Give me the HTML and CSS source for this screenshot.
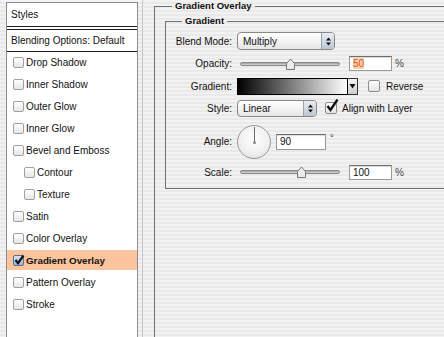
FILE: index.html
```html
<!DOCTYPE html>
<html lang="en">
<head>
  <meta charset="UTF-8" />
  <title>Layer Style - Gradient Overlay</title>
  <link rel="stylesheet" href="styles.css">
</head>
<body>

  <div class="window">
    <aside class="styles-panel">
      <div class="panel-title">Styles</div>
      <div class="panel-blend">Blending Options: Default</div>
      <ul class="style-list">
        <li class="style-item"><span class="check"></span>Drop Shadow</li>
        <li class="style-item"><span class="check"></span>Inner Shadow</li>
        <li class="style-item"><span class="check"></span>Outer Glow</li>
        <li class="style-item"><span class="check"></span>Inner Glow</li>
        <li class="style-item"><span class="check"></span>Bevel and Emboss</li>
        <li class="style-item sub"><span class="check"></span>Contour</li>
        <li class="style-item sub"><span class="check"></span>Texture</li>
        <li class="style-item"><span class="check"></span>Satin</li>
        <li class="style-item"><span class="check"></span>Color Overlay</li>
        <li class="style-item selected">
          <span class="check on">
            <svg viewBox="0 0 12 12" width="12" height="12"><path d="M2.5 6 L5 9.2 L10.5 1.5" fill="none" stroke="#111" stroke-width="2.2"/></svg>
          </span>Gradient Overlay
        </li>
        <li class="style-item"><span class="check"></span>Pattern Overlay</li>
        <li class="style-item"><span class="check"></span>Stroke</li>
      </ul>
    </aside>

    <div class="gutter"></div>

    <main class="settings">
      <fieldset class="group outer">
        <legend>Gradient Overlay</legend>

        <fieldset class="group inner">
          <legend>Gradient</legend>

          <div class="row row-blend">
            <span class="label">Blend Mode:</span>
            <div class="popup popup-blend">
              <span class="popup-value">Multiply</span>
              <span class="popup-arrows">
                <svg viewBox="0 0 7 11" width="7" height="11"><path d="M3.5 1.5 L6 4.5 H1 Z M1 6.5 H6 L3.5 9.5 Z" fill="#111"/></svg>
              </span>
            </div>
          </div>

          <div class="row row-opacity">
            <span class="label">Opacity:</span>
            <div class="slider">
              <div class="slider-track"></div>
              <svg class="slider-thumb" style="left: 50%" viewBox="0 0 11 12" width="11" height="12"><path d="M1.5 11.5 V5.5 L5.5 1 L9.5 5.5 V11.5 Z" fill="#ebebeb" stroke="#777"/></svg>
            </div>
            <div class="field field-num"><span class="selected-text">50</span></div>
            <span class="unit">%</span>
          </div>

          <div class="row row-gradient">
            <span class="label">Gradient:</span>
            <div class="gradient-picker">
              <div class="gradient-swatch"></div>
              <div class="gradient-arrow">
                <svg viewBox="0 0 7 6" width="7" height="6"><path d="M0.5 1 H6.5 L3.5 5.5 Z" fill="#111"/></svg>
              </div>
            </div>
            <span class="box"></span>
            <span class="box-label">Reverse</span>
          </div>

          <div class="row row-style">
            <span class="label">Style:</span>
            <div class="popup popup-style">
              <span class="popup-value">Linear</span>
              <span class="popup-arrows">
                <svg viewBox="0 0 7 11" width="7" height="11"><path d="M3.5 1.5 L6 4.5 H1 Z M1 6.5 H6 L3.5 9.5 Z" fill="#111"/></svg>
              </span>
            </div>
            <span class="box checked">
              <svg viewBox="0 0 14 14" width="14" height="14"><path d="M2.5 7 L5.5 11 L12.5 0.5" fill="none" stroke="#111" stroke-width="2.4"/></svg>
            </span>
            <span class="box-label">Align with Layer</span>
          </div>

          <div class="row row-angle">
            <span class="label">Angle:</span>
            <div class="dial">
              <span class="dial-hand"></span>
              <span class="dial-dot"></span>
            </div>
            <div class="field field-angle">90</div>
            <span class="degree">°</span>
          </div>

          <div class="row row-scale">
            <span class="label">Scale:</span>
            <div class="slider">
              <div class="slider-track"></div>
              <svg class="slider-thumb" style="left: 61%" viewBox="0 0 11 12" width="11" height="12"><path d="M1.5 11.5 V5.5 L5.5 1 L9.5 5.5 V11.5 Z" fill="#ebebeb" stroke="#777"/></svg>
            </div>
            <div class="field field-num">100</div>
            <span class="unit">%</span>
          </div>
        </fieldset>
      </fieldset>
    </main>
  </div>

</body>
</html>
```

FILE: styles.css
```css
  * {
    margin: 0;
    padding: 0;
    box-sizing: border-box;
  }

  body {
    width: 444px;
    height: 337px;
    overflow: hidden;
    font-family: "Liberation Sans", Arial, sans-serif;
    font-size: 10px;
    color: #111;
    background: repeating-linear-gradient(#f2f2f2 0 2px, #e9e9e9 2px 4px);
  }

  .window {
    display: flex;
    height: 100%;
    padding-left: 6px;
  }

  /* left column: list of effects */
  .styles-panel {
    flex: none;
    width: 132px;
    height: 335px;
    margin-top: 2px;
    background: #fff;
    border: 1px solid #8d8d8d;
    border-bottom: none;
  }

  .panel-title {
    height: 24px;
    line-height: 23px;
    padding-left: 4px;
    border-bottom: 1px solid #1b1b1b;
  }

  .panel-blend {
    height: 23px;
    margin-top: 2px;
    line-height: 21px;
    padding-left: 4px;
    border-top: 1px solid #1b1b1b;
    border-bottom: 1px solid #1b1b1b;
  }

  .style-list {
    list-style: none;
  }

  .style-item {
    display: flex;
    align-items: center;
    height: 20px;
    margin-bottom: 2px;
    padding-left: 6px;
  }

  .style-item.sub {
    padding-left: 17px;
  }

  .style-item.selected {
    background: #fcc49c;
    font-weight: bold;
    font-size: 9.8px;
  }

  .check {
    position: relative;
    flex: none;
    width: 11px;
    height: 11px;
    margin-right: 2px;
    border: 1px solid #a0a0a0;
    border-radius: 2px;
    background: linear-gradient(#fff, #e6e6e6);
  }

  .check.on {
    border-color: #5b6f8c;
    background: linear-gradient(#d9e6f6, #98b2d6);
  }

  .check svg {
    position: absolute;
    left: -1px;
    top: -2px;
  }

  .gutter {
    flex: none;
    width: 16px;
    padding-left: 4px;
  }

  .gutter::before {
    content: "";
    display: block;
    width: 1px;
    height: 100%;
    background: #c6c6c6;
  }

  /* right column: settings */
  .settings {
    flex: 1;
    min-width: 0;
  }

  .group {
    border: 1px solid #727272;
    border-right: none;
    min-width: 0;
  }

  .group legend {
    font-weight: bold;
    font-size: 9.5px;
    line-height: 12px;
    padding: 0 3px;
  }

  .outer {
    width: 290px;
    height: 337px;
    border-bottom: none;
    padding: 3px 0 0 10px;
  }

  .outer > legend {
    margin-left: 7px;
  }

  .inner {
    width: 279px;
    padding: 3px 0 8px 0;
  }

  .inner > legend {
    margin-left: 16px;
  }

  .row {
    display: flex;
    align-items: center;
  }

  .row-blend { height: 22px; }
  .row-opacity { height: 23px; }
  .row-gradient { height: 22px; }
  .row-style { height: 22px; }
  .row-angle { height: 45px; }
  .row-scale { height: 16px; }

  .label {
    flex: none;
    width: 66px;
    margin-right: 5px;
    text-align: right;
  }

  /* aqua popup menu */
  .popup {
    display: flex;
    align-items: center;
    height: 18px;
    border: 1px solid #888;
    border-radius: 4px;
    background: linear-gradient(#ffffff, #f3f3f3 50%, #e6e6e6);
    overflow: hidden;
  }

  .popup-blend {
    width: 98px;
  }

  .popup-style {
    width: 80px;
    height: 17px;
  }

  .popup-value {
    flex: 1;
    padding-left: 5px;
  }

  .popup-arrows {
    display: flex;
    align-items: center;
    justify-content: center;
    width: 13px;
    height: 100%;
    border-left: 1px solid #9aa3ad;
    background: linear-gradient(#e8edf3, #bcc6d1);
  }

  /* slider */
  .slider {
    position: relative;
    width: 100px;
    height: 12px;
    margin-left: 3px;
    display: flex;
    align-items: center;
  }

  .slider-track {
    width: 100%;
    height: 4px;
    border: 1px solid #8a8a8a;
    border-radius: 2px;
    background: linear-gradient(#9c9c9c, #dcdcdc);
  }

  .slider-thumb {
    position: absolute;
    top: 0;
    margin-left: -5px;
  }

  /* text fields */
  .field {
    height: 15px;
    line-height: 13px;
    padding-left: 3px;
    background: #fff;
    border: 1px solid #9a9a9a;
    border-top-color: #6c6c6c;
    box-shadow: inset 0 1px 1px rgba(0,0,0,0.15);
  }

  .field-num {
    width: 43px;
    margin-left: 9px;
  }

  .field-angle {
    width: 50px;
    height: 16px;
    margin-left: 5px;
  }

  .selected-text {
    color: #d8541e;
    background: #fbd0ad;
  }

  .unit {
    margin-left: 3px;
    color: #444;
  }

  .degree {
    align-self: flex-start;
    margin-top: 14px;
    margin-left: 4px;
    font-size: 9px;
  }

  /* gradient swatch */
  .gradient-picker {
    display: flex;
    height: 17px;
  }

  .gradient-swatch {
    width: 111px;
    border: 1px solid #000;
    background: linear-gradient(to right, #000, #fff);
  }

  .gradient-arrow {
    display: flex;
    align-items: center;
    justify-content: center;
    width: 10px;
    border: 1px solid #333;
    border-left: none;
    background: linear-gradient(#f4f4f4, #cfcfcf);
  }

  /* aqua checkbox */
  .box {
    position: relative;
    flex: none;
    width: 12px;
    height: 12px;
    margin-left: 10px;
    border: 1px solid #8d8d8d;
    border-radius: 2px;
    background: linear-gradient(#fff, #e4e4e4);
  }

  .box.checked {
    margin-left: 8px;
  }

  .box svg {
    position: absolute;
    left: -1px;
    top: -4px;
  }

  .box-label {
    margin-left: 6px;
  }

  .row-style .box-label {
    margin-left: 5px;
  }

  /* angle dial */
  .dial {
    position: relative;
    flex: none;
    width: 34px;
    height: 34px;
    border: 1px solid #999;
    border-radius: 50%;
    background: radial-gradient(circle at 50% 40%, #ffffff, #efefef 60%, #d8d8d8);
  }

  .dial-hand {
    position: absolute;
    left: 15.5px;
    top: 1px;
    width: 1px;
    height: 15px;
    background: #6a6a6a;
  }

  .dial-dot {
    position: absolute;
    left: 14.5px;
    top: 15px;
    width: 3px;
    height: 3px;
    border-radius: 50%;
    background: #888;
  }
```
